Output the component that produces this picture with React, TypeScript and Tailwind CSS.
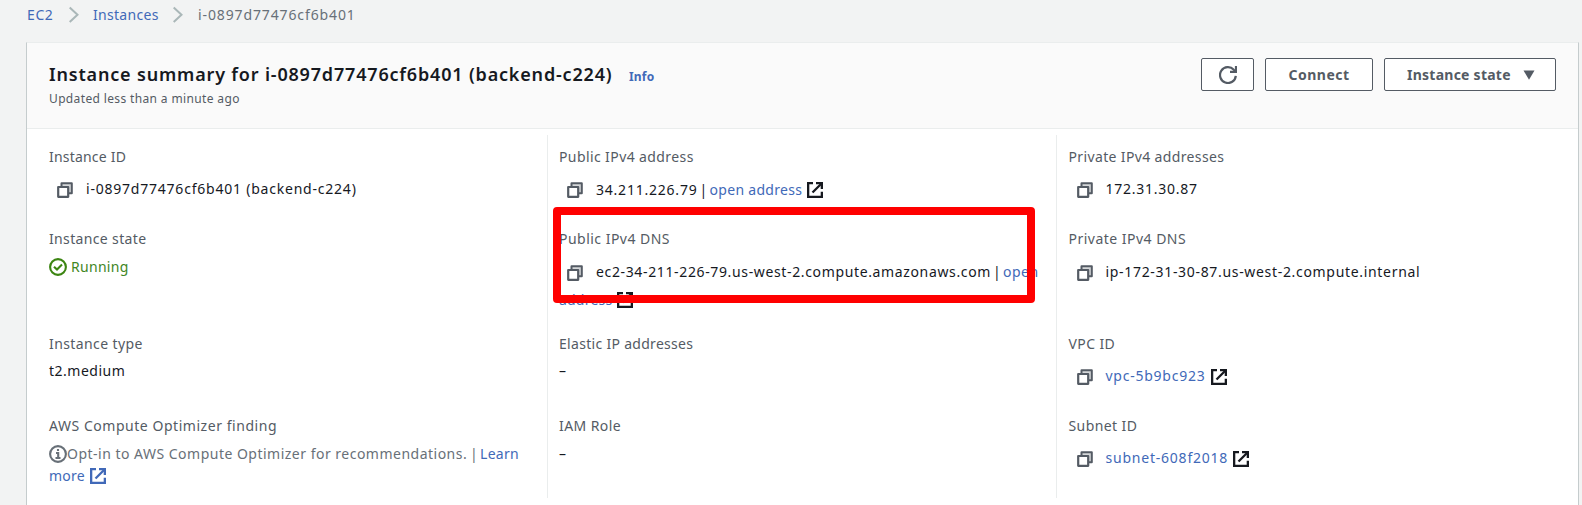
import type { ReactNode } from "react";

function Chevron() {
  return (
    <svg className="mt-0.5 h-[18px] w-[11px] shrink-0" viewBox="0 0 11 18" fill="none" stroke="#aab7b8" strokeWidth="2">
      <path d="M0.7 1.5 L8.5 8.8 L0.7 16" />
    </svg>
  );
}

function CopyIcon() {
  return (
    <svg className="h-4 w-4 shrink-0" viewBox="0 0 16 16" fill="none" stroke="#545b64" strokeWidth="2" strokeLinejoin="round">
      <path d="M4.5 4.5 V1.2 H14.8 V11.2 H11.5" fill="#d5d7d9" />
      <path d="M1.2 5 H11.2 V14.8 H1.2 Z" fill="#ffffff" strokeWidth="2.2" />
    </svg>
  );
}

function ExternalIcon() {
  return (
    <svg className="h-4 w-4 shrink-0" viewBox="0 0 16 16" fill="none" stroke="currentColor" strokeWidth="2.3">
      <path d="M6 1.15 H1.15 V14.85 H14.85 V9.8" />
      <path d="M9 1.15 H14.85 V7" />
      <path d="M14.5 1.5 L5.5 10.5" />
    </svg>
  );
}

function Field({ label, spacing, height, children }: { label: string; spacing: string; height: string; children: ReactNode }) {
  return (
    <div className={height}>
      <div className={`text-[#545b64] ${spacing}`}>{label}</div>
      {children}
    </div>
  );
}

function CopyValue({ pad, children }: { pad: string; children: ReactNode }) {
  return (
    <div className={`ml-2 flex whitespace-nowrap ${pad}`}>
      <div className="mr-[13px] pt-1">
        <CopyIcon />
      </div>
      {children}
    </div>
  );
}

const link = "text-[#4169b8]";

export default function App() {
  return (
    <div className="relative h-[505px] w-[1582px] overflow-hidden bg-[#f2f3f3] font-['Noto_Sans',sans-serif] text-[14px] leading-[22px] text-[#16191f]">
      <nav className="flex h-[42px] pt-1 pl-[27px]">
        <span className={`w-[41.5px] tracking-[0.6px] ${link}`}>EC2</span>
        <Chevron />
        <span className={`ml-[13.5px] w-[80px] tracking-[0.3px] ${link}`}>Instances</span>
        <Chevron />
        <span className="ml-[14px] tracking-[0.88px] text-[#687078]">i-0897d77476cf6b401</span>
      </nav>

      <main className="ml-[26px] h-[463px] w-[1553px] border-x border-t border-x-[#c5cccd] border-t-[#eaeded] bg-white">
        <header className="flex h-[86px] items-start justify-between border-b border-[#eaeded] bg-[#fafafa] pt-[15px] pr-[22px] pl-[22px]">
          <div className="pt-[5px]">
            <div className="flex items-baseline">
              <h1 className="w-[565px] text-[18px] leading-[22px] font-semibold tracking-[0.82px] whitespace-nowrap">
                Instance summary for i-0897d77476cf6b401 (backend-c224)
              </h1>
              <a className={`ml-[15px] text-[12px] font-bold tracking-[0.2px] ${link}`}>Info</a>
            </div>
            <p className="mt-px text-[12px] leading-[20px] tracking-[0.36px] text-[#545b64]">Updated less than a minute ago</p>
          </div>
          <div className="flex gap-[11px] font-bold text-[#545b64]">
            <button className="flex h-[33px] w-[53px] items-center justify-center rounded-[2px] border border-[#545b64] bg-white">
              <svg className="h-[18px] w-[18px]" viewBox="0 0 18 18" fill="none" stroke="#545b64" strokeWidth="2.2">
                <path d="M16.8 9.8 A7.9 7.9 0 1 1 14.8 3.8 L16 5" />
                <path d="M17 0 V5.8 H11" />
              </svg>
            </button>
            <button className="h-[33px] w-[108px] rounded-[2px] border border-[#545b64] bg-white tracking-[0.5px]">Connect</button>
            <button className="flex h-[33px] w-[172px] items-center rounded-[2px] border border-[#545b64] bg-white pl-[22px] tracking-[0.25px]">
              Instance state
              <svg className="ml-[12.5px] h-[10px] w-[12px]" viewBox="0 0 12 10" fill="#545b64">
                <path d="M0.5 0.5 H11.5 L6 9.7 Z" />
              </svg>
            </button>
          </div>
        </header>

        <div className="mt-[6px] flex h-[363px]">
          <section className="w-[520px] pt-[11px] pl-[22px]">
            <Field label="Instance ID" spacing="tracking-[0.2px]" height="h-[82px]">
              <CopyValue pad="pt-[10px]">
                <span className="tracking-[0.78px]">i-0897d77476cf6b401 (backend-c224)</span>
              </CopyValue>
            </Field>
            <Field label="Instance state" spacing="tracking-[0.35px]" height="h-[105px]">
              <div className="mt-[6px] flex items-center text-[#3f8624]">
                <svg className="mr-[4px] h-[18px] w-[18px]" viewBox="0 0 18 18" fill="none" stroke="#3c8512" strokeWidth="2.1">
                  <circle cx="9" cy="9" r="7.9" />
                  <path d="M5 8.7 L8 11.6 L13 6.6" />
                </svg>
                <span className="tracking-[0.3px]">Running</span>
              </div>
            </Field>
            <Field label="Instance type" spacing="tracking-[0.4px]" height="h-[82px]">
              <div className="mt-[5px] tracking-[0.5px]">t2.medium</div>
            </Field>
            <Field label="AWS Compute Optimizer finding" spacing="tracking-[0.54px]" height="h-[82px]">
              <div className="mt-[6px] text-[#687078]">
                <div className="flex items-center whitespace-nowrap">
                  <svg className="h-[18px] w-[18px]" viewBox="0 0 18 18" fill="none" stroke="#687078" strokeWidth="2.1">
                    <circle cx="9" cy="9" r="7.9" />
                    <path d="M9 4 V6 M7 8 H9.2 V13 M6.5 13 H11.5" />
                  </svg>
                  <span className="w-[403px] tracking-[0.49px]">Opt-in to AWS Compute Optimizer for recommendations.</span>
                  <span className="w-[10px]">|</span>
                  <a className={`tracking-[0.3px] ${link}`}>Learn</a>
                </div>
                <a className={`flex items-center ${link}`}>
                  <span className="mr-[5px] tracking-[0.2px]">more</span>
                  <ExternalIcon />
                </a>
              </div>
            </Field>
          </section>

          <section className="w-[509px] border-l border-[#eaeded] pt-[11px] pl-[11px]">
            <Field label="Public IPv4 address" spacing="tracking-[0.4px]" height="h-[82px]">
              <CopyValue pad="pt-[10px]">
                <div className="flex pt-px">
                  <span className="w-[103.5px] tracking-[0.78px]">34.211.226.79</span>
                  <span className="w-[10px]">|</span>
                  <a className={`mr-[5px] tracking-[0.3px] ${link}`}>open address</a>
                </div>
                <div className="pt-1">
                  <ExternalIcon />
                </div>
              </CopyValue>
            </Field>
            <Field label="Public IPv4 DNS" spacing="tracking-[0.48px]" height="h-[105px]">
              <CopyValue pad="pt-[11px]">
                <span className="w-[397px] tracking-[0.64px]">ec2-34-211-226-79.us-west-2.compute.amazonaws.com</span>
                <span className="w-[10px]">|</span>
                <a className={`tracking-[0.5px] ${link}`}>open</a>
              </CopyValue>
              <div className="mt-[6px] flex items-center">
                <a className={`mr-[5px] tracking-[0.2px] ${link}`}>address</a>
                <ExternalIcon />
              </div>
            </Field>
            <Field label="Elastic IP addresses" spacing="tracking-[0.3px]" height="h-[82px]">
              <div className="mt-[5px]">–</div>
            </Field>
            <Field label="IAM Role" spacing="tracking-[0.42px]" height="h-[82px]">
              <div className="mt-[6px]">–</div>
            </Field>
          </section>

          <section className="w-[522px] border-l border-[#eaeded] pt-[11px] pl-[11.5px]">
            <Field label="Private IPv4 addresses" spacing="tracking-[0.36px]" height="h-[82px]">
              <CopyValue pad="pt-[10px]">
                <span className="tracking-[0.75px]">172.31.30.87</span>
              </CopyValue>
            </Field>
            <Field label="Private IPv4 DNS" spacing="tracking-[0.48px]" height="h-[105px]">
              <CopyValue pad="pt-[11px]">
                <span className="tracking-[0.68px]">ip-172-31-30-87.us-west-2.compute.internal</span>
              </CopyValue>
            </Field>
            <Field label="VPC ID" spacing="tracking-[0.4px]" height="h-[82px]">
              <CopyValue pad="pt-[10px]">
                <a className={`mr-[6px] tracking-[0.75px] ${link}`}>vpc-5b9bc923</a>
                <div className="pt-1">
                  <ExternalIcon />
                </div>
              </CopyValue>
            </Field>
            <Field label="Subnet ID" spacing="tracking-[0.4px]" height="h-[82px]">
              <CopyValue pad="pt-[10px]">
                <a className={`mr-[5px] tracking-[0.78px] ${link}`}>subnet-608f2018</a>
                <div className="pt-1">
                  <ExternalIcon />
                </div>
              </CopyValue>
            </Field>
          </section>
        </div>
      </main>

      <div className="absolute top-[207px] left-[552.5px] h-[96px] w-[482.5px] rounded-[4px] border-8 border-[#ff0000]" />
    </div>
  );
}
